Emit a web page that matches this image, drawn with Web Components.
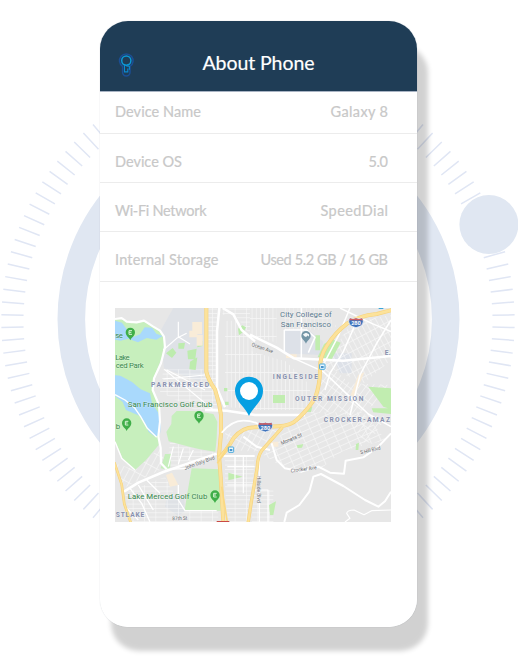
<!DOCTYPE html>
<html lang="en">
<head>
<meta charset="utf-8">
<title>About Phone</title>
<style>
html,body{margin:0;width:518px;height:662px;overflow:hidden;background:#fff;font-family:Lato,"Open Sans",sans-serif}
</style>
</head>
<body>
<phone-stage>
  <dial-backdrop slot="backdrop"></dial-backdrop>
  <phone-card>
    <phone-header slot="header"><fit-text width="112">About Phone</fit-text></phone-header>
    <info-row style="height:42px"><fit-text slot="label" width="86">Device Name</fit-text><fit-text width="57.5">Galaxy 8</fit-text></info-row>
    <info-row style="padding-bottom:10px"><fit-text slot="label" width="67">Device OS</fit-text><fit-text width="19.5">5.0</fit-text></info-row>
    <info-row style="padding-bottom:10px"><fit-text slot="label" width="91.5">Wi-Fi Network</fit-text><fit-text width="67.5">SpeedDial</fit-text></info-row>
    <info-row style="height:50px"><fit-text slot="label" width="103.5">Internal Storage</fit-text><fit-text width="127.5">Used 5.2 GB / 16 GB</fit-text></info-row>
    <city-map></city-map>
  </phone-card>
</phone-stage>
<script>
const shadow = (el, html) => { const t = document.createElement('template'); t.innerHTML = html; el.attachShadow({mode:'open'}).append(t.content.cloneNode(true)); return el.shadowRoot; };

customElements.define('phone-stage', class extends HTMLElement {
  constructor(){ super(); shadow(this, `<style>:host{display:grid;width:518px;height:662px;overflow:hidden}
  ::slotted(*){grid-area:1/1}::slotted(phone-card){margin:21px 0 0 100px}</style><slot name="backdrop"></slot><slot></slot>`); }
});

customElements.define('dial-backdrop', class extends HTMLElement {
  constructor(){ super();
    let d = '';
    for (let i = -18; i < 18; i++) {
      const a = (i + .5) * 2.857 * Math.PI / 180, c = Math.cos(a), s = Math.sin(a);
      for (const k of [-1, 1]) d += `M${(258+k*c*234.5).toFixed(2)} ${(321.2+s*234.5).toFixed(2)}L${(258+k*c*256.7).toFixed(2)} ${(321.2+s*256.7).toFixed(2)}`;
    }
    shadow(this, `<style>:host{display:block}svg{display:block}</style>
    <svg width="518" height="662"><circle cx="258.5" cy="319.2" r="187.2" fill="none" stroke="#e0e7f2" stroke-width="27.6"/>
    <path d="${d}" stroke="#e0e6f4" stroke-width="1.5"/><circle cx="488.9" cy="224.5" r="29.5" fill="#e0e7f2"/></svg>`); }
});

customElements.define('phone-card', class extends HTMLElement {
  constructor(){ super(); shadow(this, `<style>:host{display:block;box-sizing:border-box;width:317px;height:606px;border-radius:28px;background:#fff;box-shadow:11px 24px 5px rgba(0,0,0,.18),0 0 1px rgba(60,80,100,.35)}
  .in{display:flex;flex-direction:column;height:606px;border-radius:28px;overflow:hidden;background:#fff}
  ::slotted(city-map){margin:26px 0 0 15px}</style><div class="in"><slot name="header"></slot><slot></slot></div>`); }
});

customElements.define('phone-header', class extends HTMLElement {
  constructor(){ super(); shadow(this, `<style>:host{display:grid;grid-template-columns:52px 1fr 52px;box-sizing:border-box;height:70.5px;flex:none;background:#1f3d56;color:#fff;font-size:19.5px;border-bottom:1px solid #a9b4c4}
  svg{margin:31px 0 0 17px}.t{text-align:center;line-height:26px;padding-top:29px}</style>
  <svg width="18" height="27" viewBox="0 0 18 27" fill="none"><path d="M5.6 14.4A6.8 6.8 0 1 1 13 14.4V20.3A3.7 3.7 0 0 1 5.6 20.3Z" stroke="#1b4e94" stroke-width="1.5"/>
  <circle cx="9.3" cy="8.6" r="4.6" stroke="#0c98d6" stroke-width="1.5"/><path d="M7.5 13V19.9H10.8V16.4M9.4 14.2H12.4V17.7" stroke="#0c8ad0" stroke-width="1.1"/></svg>
  <div class="t"><slot></slot></div>`); }
});

customElements.define('info-row', class extends HTMLElement {
  constructor(){ super(); shadow(this, `<style>:host{display:flex;flex:none;box-sizing:border-box;height:49px;padding:0 29px 11px 15px;align-items:flex-end;justify-content:space-between;color:#c8c8c8;font-size:14.5px;line-height:20px;border-bottom:1px solid #ececec}</style>
  <slot name="label"></slot><slot></slot>`); }
});

/* Spreads letter spacing so that a string fills the given width. */
customElements.define('fit-text', class extends HTMLElement {
  connectedCallback(){
    if (this.shadowRoot) return;
    const text = this.textContent;
    const r = shadow(this, `<style>:host{display:inline-block;white-space:nowrap}span{-webkit-text-stroke:.2px currentColor}</style><span><slot></slot></span>`);
    const span = r.querySelector('span'), w = +this.getAttribute('width');
    span.style.letterSpacing = ((w - span.getBoundingClientRect().width) / (text.length - 1)) + 'px';
    this.style.width = w + 'px';
    this.style.textAlign = 'left';
  }
});

customElements.define('city-map', class extends HTMLElement {
  constructor(){ super();
    const grid = (id, w, h, rot) => `<pattern id="${id}" width="${w}" height="${h}" patternUnits="userSpaceOnUse" patternTransform="rotate(${rot})"><path d="M0 0H${w}M0 0V${h}" stroke="#fff" stroke-width="4"/></pattern>`;
    const pin = (x, y) => `<g transform="translate(${x} ${y})"><path d="M0 21C-3 12-14 9-14-3A14 14 0 0 1 14-3C14 9 3 12 0 21Z" fill="#3fae49"/><path d="M5-8H-4V3H5M-4-3H3" fill="none" stroke="#d8f3d4" stroke-width="3"/></g>`;
    const shield = (x, y) => `<g transform="translate(${x} ${y})"><path d="M-18-13Q-9-9 0-13Q9-9 18-13Q25-3 20 5Q15 13 0 16Q-15 13-20 5Q-25-3-18-13Z" fill="#3f73bb" stroke="#fff" stroke-width="2"/><path d="M-18-12Q-9-8 0-12Q9-8 18-12L21-6H-21Z" fill="#d35d60"/><text y="9" text-anchor="middle" font-size="17" font-weight="700" fill="#fff" stroke="none">280</text></g>`;
    const bus = (x, y) => `<g transform="translate(${x} ${y})"><rect x="-8" y="-8" width="16" height="16" rx="2" fill="#eaf6fd" stroke="#4aa9dc" stroke-width="3"/><path d="M-4-2H4V4H-4Z" fill="#4a94cc"/></g>`;
    const area = (t, x, y, w) => `<text x="${x}" y="${y}" textLength="${w}" font-size="20" font-weight="700" fill="#8790ae">${t}</text>`;
    const place = (t, x, y, w) => `<text x="${x}" y="${y}" textLength="${w}" font-size="23.5" fill="#35864a">${t}</text>`;
    const road = (t, x, y, w, a) => `<text transform="translate(${x} ${y}) rotate(${a})" textLength="${w}" lengthAdjust="spacingAndGlyphs" font-size="16" fill="#5f6468">${t}</text>`;
    const hw = (d, w) => `<path d="${d}" stroke="#f6d27c" stroke-width="${w}"/><path d="${d}" stroke="#fce29a" stroke-width="${w-3.5}"/>`;
    shadow(this, `<style>:host{display:block;width:276px;height:214px;flex:none}svg{display:block;font-family:Roboto,sans-serif}</style>
<svg width="276" height="214" viewBox="15 24 828 642"><defs>
${grid('v',12.5,54,0)}${grid('h',34,13,0)}${grid('d',16,32,37)}${grid('e',30,17,-24)}${grid('f',15,28,-28)}${grid('g',18,38,28)}</defs>
<rect x="15" y="24" width="828" height="642" fill="#e7e7e7"/>
<path d="M150 95L190 24H283L284 218 270 245 162 205Z" fill="#dfe2e7"/>
<path d="M523 90H595L640 125 632 165 523 160ZM665 160H725V220H690Z" fill="#dde1e8"/>
<path d="M172 585H222L225 632 205 648 165 620Z" fill="#dfe2e6"/>
<g stroke="none" opacity=".68">
<path d="M345 62H384L432 132 432 325 345 322Z" fill="url(#v)"/><path d="M420 24H500V128L420 105ZM423 154L527 184 600 255V330H423Z" fill="url(#v)"/>
<path d="M295 24H322V310L294 220ZM338 24H420V105L375 45H338Z" fill="url(#h)"/>
<path d="M160 208H280L310 270 325 335 255 330 150 275Z" fill="url(#h)"/>
<path d="M725 65L843 45V180L762 250 640 195 690 120Z" fill="url(#f)"/>
<path d="M642 180L720 250 843 255V290L740 340 830 350 770 440 700 335 600 340 630 280Z" fill="url(#d)"/>
<path d="M585 338L760 335 828 420 700 452 640 500 570 520 500 490 460 465 528 388Z" fill="url(#e)"/>
<path d="M15 490L75 510 150 443 170 500 100 535 40 565Z" fill="url(#g)"/>
<path d="M180 425L235 442 315 458 280 488 170 510Z" fill="url(#h)"/>
<path d="M345 468H433L428 590 420 666H352L345 560Z" fill="url(#h)"/>
<path d="M45 580L165 530 195 585 225 632H325V666H66Z" fill="url(#h)"/>
<path d="M345 400L420 390 505 390 440 455 360 450Z" fill="url(#g)"/>
<path d="M430 570H490V666H425Z" fill="url(#h)"/>
<path d="M520 24H640L680 80 640 90H523Z" fill="url(#v)" opacity=".6"/>
</g>
<path d="M15 58L45 60 62 70 100 65 128 75 158 102 163 128 155 175 130 235 128 270 145 310 150 345 146 435 108 480 75 510 40 480 15 422Z" fill="#c7efbd"/>
<path d="M185 348L200 333H255L310 342 322 365 320 415 316 455 270 448 238 440 176 424 169 396 184 372ZM245 505L332 508V632H224L231 585 238 545ZM165 462L183 462 180 511 152 505Z" fill="#c7efbd"/>
<path d="M168 160L188 144 199 158 186 174ZM205 130L225 128 222 146H205ZM232 152L260 146 256 177 234 178ZM240 185L262 172 257 210 238 208ZM262 124L278 122V138L262 142ZM342 264H352V274H342ZM345 305H356V315H345ZM384 86L397 76 408 82 402 94 387 106Z" fill="#bdecae"/>
<path d="M616 106H630V151H616ZM666 118L692 128 665 178 623 171 642 132ZM489 285H525V309H489ZM775 260L843 265V328L820 320ZM595 320H607L603 336H590ZM785 325L843 325V342L790 337ZM355 518L398 530 355 541ZM560 436L580 432 576 443 563 444ZM738 432L747 428 745 450H737ZM477 615L498 604 490 645H480Z" fill="#c1edb0"/>
<path d="M15 62L36 68 50 88 70 111 90 103 104 82 126 83 139 101 158 108 139 119 110 114 84 127 54 116 32 122 15 119ZM15 226C35 225 45 236 66 246L92 268 120 280 126 310 144 337 153 370 150 402 136 410 116 396 102 364 88 347 48 330 38 306 15 288Z" fill="#a9d9fc"/>
<path d="M247 66H276V103H247ZM238 92H262V112H238ZM260 105H278V137H260ZM168 525L186 518 205 555 180 560ZM528 163H560V174H528ZM485 425H505V440H485ZM745 225L763 217 733 290 722 285Z" fill="#f9ecd8"/>
<g fill="none" stroke="#fff" stroke-width="6.5" stroke-linejoin="round">
<path d="M15 57L35 54 50 65 80 67 102 62 130 80 150 92 162 110 165 142 153 190 132 235 128 270 147 315 150 365 145 410 152 443 153 490 170 508"/>
<path d="M15 284L45 300 75 325 92 350 112 385 140 412" stroke-width="4"/>
<path d="M42 575L85 548 160 516 235 490 320 461M328 24L321 95V265L345 322M338 24L370 43 395 90 435 124M420 104L500 143 552 175 700 182 843 168M285 330L350 332 435 345 585 345" stroke-width="7.5"/>
<path d="M574 24V176M523 90V160M523 90H590L615 112 595 158M720 24L684 110 642 190M735 75L700 155 660 220 645 270M552 175L640 215 712 283 775 342 843 380M843 60L800 130 750 225 720 345M690 24L785 70 843 95" stroke-width="4.5"/>
<path d="M170 210L285 270M160 237L285 225M163 208L310 330M160 255L310 262M160 150L200 115 230 100M205 65V110L240 132" stroke-width="3.5"/>
<path d="M400 410L440 440 480 450M340 468H434M485 430L500 480 525 505 575 515 625 500 660 518 702 521 707 482 760 472 805 440 843 400M523 666L530 638 568 615 598 575 610 530 633 522 700 558 765 600 805 620 825 604 843 575" stroke-width="6"/>
<path d="M705 666L720 655 710 640Q712 630 732 630L762 644 785 632 843 630" stroke-width="3.5"/>
<path d="M205 555L205 600 225 632H320M75 510L35 475 15 425M45 620L85 660M60 565L95 610 120 666M85 555L130 630M110 540L150 580" stroke-width="4"/>
<path d="M448 460V666M434 570L474 570V666M170 508L240 505M190 440L175 500M220 445L205 492M250 450L235 480M352 500H434M352 555H434M375 468V580M400 468V580" stroke-width="3.5"/>
</g>
<g fill="none" stroke-linejoin="round" stroke-linecap="butt">
${hw('M289 20V215Q295 240 315 268L328 315 333 345V400L327 467 332 530 340 666',12)}
${hw('M850 29L800 42Q745 48 712 70Q675 98 650 138Q627 174 630 215Q629 255 617 289Q602 320 562 358Q543 377 505 379L432 382Q398 382 371 414Q345 459 325 476',12)}
${hw('M517 382L455 452Q443 470 442 500L424 605 414 670',10)}
${hw('M13 487L35 553 43 612 63 670',8)}
<path d="M322 490Q350 450 360 428M335 560L352 666" stroke="#fbd983" stroke-width="5"/>
<path d="M335 398Q365 362 400 362Q425 362 445 372" stroke="#fff" stroke-width="5"/>
</g>
<path d="M320 663H358V666H320Z" fill="#c94a45"/>
${pin(61,100)}${pin(50,372)}${pin(267,350)}${pin(315,588)}
<path d="M588 131C584 120 574 117 574 107A14 14 0 0 1 602 107C602 117 592 120 588 131Z" fill="#7395a6"/><path d="M579 103L588 98 597 103V109H594V106L588 111 582 108Z" fill="#f2f6f8"/>
${bus(637,200)}${bus(363,449)}${shield(738,67)}${shield(466,380)}<path d="M806 24H820V27H806Z" fill="#3aa6d8"/>
<g stroke="#fff" stroke-opacity=".4" stroke-width="2.5" paint-order="stroke" stroke-linejoin="round">
${place('se',16,114,23)}${place('Lake',16,181,43)}${place('ced Park',17,205,84)}${place('San Francisco Golf Club',53,322,254)}${place('b',17,386,12)}${place('Lake Merced Golf Club',53,597,239)}
${area('PARKMERCED',123,262,174)}${area('INGLESIDE',488,238,136)}${area('OUTER MISSION',555,304,205)}${area('CROCKER-AMAZ',641,366,199)}${area('E.',824,166,18)}${area('STLAKE',17,652,86)}
<g fill="#59798d" font-size="23.5"><text x="510" y="52" textLength="155">City College of</text><text x="512" y="80" textLength="151">San Francisco</text></g>
${road('Ocean Ave',424,138,67,19)}${road('John Daly Blvd',225,510,96,-20)}${road('87th St',187,661,45,-2)}${road('Moneta St',515,435,68,-23)}${road('Crocker Ave',543,518,78,-8)}${road('S Hill Blvd',752,463,62,-14)}${road('Hillside Blvd',441,528,80,90)}
</g>
<path d="M417 348C406 320 375 305 375 272A42 42 0 0 1 459 272C459 305 428 320 417 348Z" fill="#069fe2"/><circle cx="417" cy="273" r="27" fill="#fff"/>
</svg>`); }
});
</script>
</body>
</html>
